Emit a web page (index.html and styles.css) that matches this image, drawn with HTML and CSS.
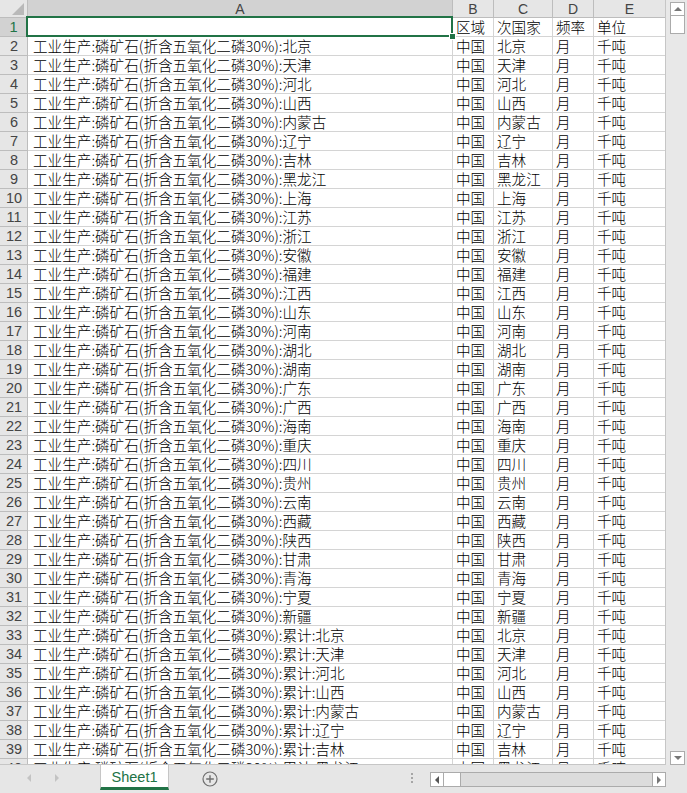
FILE: index.html
```html
<!DOCTYPE html>
<html lang="zh-CN">
<head>
<meta charset="utf-8">
<title>Sheet1</title>
<link rel="stylesheet" href="styles.css">
</head>
<body>
<div class="app">
  <div class="top">
    <div class="sheet">
      <div class="hd corner"><span class="tri"></span></div>
      <div class="hd col sel">A</div>
      <div class="hd col">B</div>
      <div class="hd col">C</div>
      <div class="hd col">D</div>
      <div class="hd col">E</div>

      <div class="hd row sel">1</div><div class="c a active"><span class="selbox"></span><span class="handle"></span></div><div class="c">区域</div><div class="c">次国家</div><div class="c">频率</div><div class="c">单位</div>
      <div class="hd row">2</div><div class="c a">工业生产:磷矿石(折含五氧化二磷30%):北京</div><div class="c">中国</div><div class="c">北京</div><div class="c">月</div><div class="c">千吨</div>
      <div class="hd row">3</div><div class="c a">工业生产:磷矿石(折含五氧化二磷30%):天津</div><div class="c">中国</div><div class="c">天津</div><div class="c">月</div><div class="c">千吨</div>
      <div class="hd row">4</div><div class="c a">工业生产:磷矿石(折含五氧化二磷30%):河北</div><div class="c">中国</div><div class="c">河北</div><div class="c">月</div><div class="c">千吨</div>
      <div class="hd row">5</div><div class="c a">工业生产:磷矿石(折含五氧化二磷30%):山西</div><div class="c">中国</div><div class="c">山西</div><div class="c">月</div><div class="c">千吨</div>
      <div class="hd row">6</div><div class="c a">工业生产:磷矿石(折含五氧化二磷30%):内蒙古</div><div class="c">中国</div><div class="c">内蒙古</div><div class="c">月</div><div class="c">千吨</div>
      <div class="hd row">7</div><div class="c a">工业生产:磷矿石(折含五氧化二磷30%):辽宁</div><div class="c">中国</div><div class="c">辽宁</div><div class="c">月</div><div class="c">千吨</div>
      <div class="hd row">8</div><div class="c a">工业生产:磷矿石(折含五氧化二磷30%):吉林</div><div class="c">中国</div><div class="c">吉林</div><div class="c">月</div><div class="c">千吨</div>
      <div class="hd row">9</div><div class="c a">工业生产:磷矿石(折含五氧化二磷30%):黑龙江</div><div class="c">中国</div><div class="c">黑龙江</div><div class="c">月</div><div class="c">千吨</div>
      <div class="hd row">10</div><div class="c a">工业生产:磷矿石(折含五氧化二磷30%):上海</div><div class="c">中国</div><div class="c">上海</div><div class="c">月</div><div class="c">千吨</div>
      <div class="hd row">11</div><div class="c a">工业生产:磷矿石(折含五氧化二磷30%):江苏</div><div class="c">中国</div><div class="c">江苏</div><div class="c">月</div><div class="c">千吨</div>
      <div class="hd row">12</div><div class="c a">工业生产:磷矿石(折含五氧化二磷30%):浙江</div><div class="c">中国</div><div class="c">浙江</div><div class="c">月</div><div class="c">千吨</div>
      <div class="hd row">13</div><div class="c a">工业生产:磷矿石(折含五氧化二磷30%):安徽</div><div class="c">中国</div><div class="c">安徽</div><div class="c">月</div><div class="c">千吨</div>
      <div class="hd row">14</div><div class="c a">工业生产:磷矿石(折含五氧化二磷30%):福建</div><div class="c">中国</div><div class="c">福建</div><div class="c">月</div><div class="c">千吨</div>
      <div class="hd row">15</div><div class="c a">工业生产:磷矿石(折含五氧化二磷30%):江西</div><div class="c">中国</div><div class="c">江西</div><div class="c">月</div><div class="c">千吨</div>
      <div class="hd row">16</div><div class="c a">工业生产:磷矿石(折含五氧化二磷30%):山东</div><div class="c">中国</div><div class="c">山东</div><div class="c">月</div><div class="c">千吨</div>
      <div class="hd row">17</div><div class="c a">工业生产:磷矿石(折含五氧化二磷30%):河南</div><div class="c">中国</div><div class="c">河南</div><div class="c">月</div><div class="c">千吨</div>
      <div class="hd row">18</div><div class="c a">工业生产:磷矿石(折含五氧化二磷30%):湖北</div><div class="c">中国</div><div class="c">湖北</div><div class="c">月</div><div class="c">千吨</div>
      <div class="hd row">19</div><div class="c a">工业生产:磷矿石(折含五氧化二磷30%):湖南</div><div class="c">中国</div><div class="c">湖南</div><div class="c">月</div><div class="c">千吨</div>
      <div class="hd row">20</div><div class="c a">工业生产:磷矿石(折含五氧化二磷30%):广东</div><div class="c">中国</div><div class="c">广东</div><div class="c">月</div><div class="c">千吨</div>
      <div class="hd row">21</div><div class="c a">工业生产:磷矿石(折含五氧化二磷30%):广西</div><div class="c">中国</div><div class="c">广西</div><div class="c">月</div><div class="c">千吨</div>
      <div class="hd row">22</div><div class="c a">工业生产:磷矿石(折含五氧化二磷30%):海南</div><div class="c">中国</div><div class="c">海南</div><div class="c">月</div><div class="c">千吨</div>
      <div class="hd row">23</div><div class="c a">工业生产:磷矿石(折含五氧化二磷30%):重庆</div><div class="c">中国</div><div class="c">重庆</div><div class="c">月</div><div class="c">千吨</div>
      <div class="hd row">24</div><div class="c a">工业生产:磷矿石(折含五氧化二磷30%):四川</div><div class="c">中国</div><div class="c">四川</div><div class="c">月</div><div class="c">千吨</div>
      <div class="hd row">25</div><div class="c a">工业生产:磷矿石(折含五氧化二磷30%):贵州</div><div class="c">中国</div><div class="c">贵州</div><div class="c">月</div><div class="c">千吨</div>
      <div class="hd row">26</div><div class="c a">工业生产:磷矿石(折含五氧化二磷30%):云南</div><div class="c">中国</div><div class="c">云南</div><div class="c">月</div><div class="c">千吨</div>
      <div class="hd row">27</div><div class="c a">工业生产:磷矿石(折含五氧化二磷30%):西藏</div><div class="c">中国</div><div class="c">西藏</div><div class="c">月</div><div class="c">千吨</div>
      <div class="hd row">28</div><div class="c a">工业生产:磷矿石(折含五氧化二磷30%):陕西</div><div class="c">中国</div><div class="c">陕西</div><div class="c">月</div><div class="c">千吨</div>
      <div class="hd row">29</div><div class="c a">工业生产:磷矿石(折含五氧化二磷30%):甘肃</div><div class="c">中国</div><div class="c">甘肃</div><div class="c">月</div><div class="c">千吨</div>
      <div class="hd row">30</div><div class="c a">工业生产:磷矿石(折含五氧化二磷30%):青海</div><div class="c">中国</div><div class="c">青海</div><div class="c">月</div><div class="c">千吨</div>
      <div class="hd row">31</div><div class="c a">工业生产:磷矿石(折含五氧化二磷30%):宁夏</div><div class="c">中国</div><div class="c">宁夏</div><div class="c">月</div><div class="c">千吨</div>
      <div class="hd row">32</div><div class="c a">工业生产:磷矿石(折含五氧化二磷30%):新疆</div><div class="c">中国</div><div class="c">新疆</div><div class="c">月</div><div class="c">千吨</div>
      <div class="hd row">33</div><div class="c a">工业生产:磷矿石(折含五氧化二磷30%):累计:北京</div><div class="c">中国</div><div class="c">北京</div><div class="c">月</div><div class="c">千吨</div>
      <div class="hd row">34</div><div class="c a">工业生产:磷矿石(折含五氧化二磷30%):累计:天津</div><div class="c">中国</div><div class="c">天津</div><div class="c">月</div><div class="c">千吨</div>
      <div class="hd row">35</div><div class="c a">工业生产:磷矿石(折含五氧化二磷30%):累计:河北</div><div class="c">中国</div><div class="c">河北</div><div class="c">月</div><div class="c">千吨</div>
      <div class="hd row">36</div><div class="c a">工业生产:磷矿石(折含五氧化二磷30%):累计:山西</div><div class="c">中国</div><div class="c">山西</div><div class="c">月</div><div class="c">千吨</div>
      <div class="hd row">37</div><div class="c a">工业生产:磷矿石(折含五氧化二磷30%):累计:内蒙古</div><div class="c">中国</div><div class="c">内蒙古</div><div class="c">月</div><div class="c">千吨</div>
      <div class="hd row">38</div><div class="c a">工业生产:磷矿石(折含五氧化二磷30%):累计:辽宁</div><div class="c">中国</div><div class="c">辽宁</div><div class="c">月</div><div class="c">千吨</div>
      <div class="hd row">39</div><div class="c a">工业生产:磷矿石(折含五氧化二磷30%):累计:吉林</div><div class="c">中国</div><div class="c">吉林</div><div class="c">月</div><div class="c">千吨</div>
      <div class="hd row">40</div><div class="c a">工业生产:磷矿石(折含五氧化二磷30%):累计:黑龙江</div><div class="c">中国</div><div class="c">黑龙江</div><div class="c">月</div><div class="c">千吨</div>
    </div>
    <div class="vscroll">
      <div class="sbtn up"><span class="arr-up"></span></div>
      <div class="vthumb"></div>
      <div class="vtrack"></div>
      <div class="sbtn down"><span class="arr-down"></span></div>
    </div>
  </div>
  <div class="bottom">
    <div class="nav">
      <span class="arr-l"></span>
      <span class="arr-r"></span>
    </div>
    <div class="tab">Sheet1</div>
    <div class="addsheet">
      <svg width="16" height="16" viewBox="0 0 16 16"><circle cx="8" cy="8" r="7" fill="none" stroke="#6f6f6f" stroke-width="1.2"/><path d="M8 4.2v7.6M4.2 8h7.6" stroke="#6f6f6f" stroke-width="1.4"/></svg>
    </div>
    <div class="spacer"></div>
    <div class="dots"><i></i><i></i><i></i></div>
    <div class="hscroll">
      <div class="hbtn"><span class="arr-hl"></span></div>
      <div class="hthumb"></div>
      <div class="htrack"></div>
      <div class="hbtn"><span class="arr-hr"></span></div>
    </div>
    <div class="corner-fill"></div>
  </div>
</div>
</body>
</html>
```
FILE: styles.css
```css
* { box-sizing: border-box; }
html, body { margin: 0; padding: 0; background: #fff; }
body { width: 687px; height: 793px; overflow: hidden; }

.app { width: 687px; height: 793px; display: flex; flex-direction: column; }
.top { display: flex; height: 765px; }

.sheet {
  width: 666px;
  height: 765px;
  overflow: hidden;
  display: grid;
  grid-template-columns: 28px 425px 41px 59px 41px 72px;
  grid-auto-rows: 19px;
  grid-template-rows: 18px;
  border-right: 1px solid #c6c6c6;
  border-bottom: 1px solid #c6c6c6;
}

.hd {
  background: #e6e6e6;
  color: #444;
  font-family: "Liberation Sans", Arial, sans-serif;
  font-size: 14px;
  border-right: 1px solid #bdbdbd;
  border-bottom: 1px solid #bdbdbd;
  display: flex;
  align-items: center;
  justify-content: center;
  line-height: 1;
}
.hd.col { padding-top: 1px; }
.hd.sel { background: #d2d2d2; color: #217346; }
.hd.col.sel { color: #444; }
.hd.row.sel { border-right: 2px solid #217346; }
.hd.row { font-size: 14.5px; padding-left: 1px; }

.corner { position: relative; }
.tri {
  position: absolute;
  right: 3px;
  bottom: 2px;
  width: 0; height: 0;
  border-left: 12px solid transparent;
  border-bottom: 12px solid #b9b9b9;
}

.c {
  font-family: "Noto Sans CJK SC", "Noto Sans", sans-serif;
  font-weight: 300;
  font-size: 14.6px;
  line-height: 18px;
  color: #000;
  padding-left: 3px;
  white-space: nowrap;
  border-right: 1px solid #d4d4d4;
  border-bottom: 1px solid #d4d4d4;
}
.c.a { padding-left: 5px; }
.c.active { position: relative; z-index: 2; }
.selbox {
  position: absolute;
  left: -2px; top: -2px; right: -1px; bottom: -1px;
  border: 2px solid #217346;
}
.handle {
  position: absolute;
  right: -4px; bottom: -4px;
  width: 7px; height: 7px;
  background: #217346;
  border: 1px solid #fff;
}

.vscroll {
  width: 21px;
  height: 765px;
  background: #e8e8e8;
  display: flex;
  flex-direction: column;
  align-items: center;
  padding: 2px 0 0 2px;
}
.sbtn {
  width: 15px;
  height: 14px;
  background: #fff;
  border: 1px solid #ababab;
  display: flex;
  align-items: center;
  justify-content: center;
}
.vthumb {
  width: 15px;
  height: 18px;
  background: #fff;
  border: 1px solid #ababab;
  border-top: none;
}
.vtrack { flex: 1; }
.arr-up { width: 0; height: 0; border-left: 4px solid transparent; border-right: 4px solid transparent; border-bottom: 4px solid #777; }
.arr-down { width: 0; height: 0; border-left: 4px solid transparent; border-right: 4px solid transparent; border-top: 4px solid #777; }

.bottom {
  height: 28px;
  background: #e6e6e6;
  display: flex;
  align-items: flex-start;
}
.nav {
  width: 100px;
  height: 26px;
  display: flex;
  align-items: center;
  padding-left: 27px;
  gap: 24px;
}
.arr-l { width: 0; height: 0; border-top: 4px solid transparent; border-bottom: 4px solid transparent; border-right: 4px solid #c3c3c3; }
.arr-r { width: 0; height: 0; border-top: 4px solid transparent; border-bottom: 4px solid transparent; border-left: 4px solid #c3c3c3; }

.tab {
  width: 69px;
  height: 25px;
  background: #fff;
  border-left: 1px solid #c6c6c6;
  border-right: 1px solid #c6c6c6;
  border-bottom: 3px solid #217346;
  color: #217346;
  font-family: "Liberation Sans", Arial, sans-serif;
  font-size: 14.5px;
  display: flex;
  align-items: center;
  justify-content: center;
  padding-top: 1px;
}
.addsheet {
  width: 16px; height: 16px;
  margin: 6px 0 0 33px;
  display: flex;
}
.spacer { flex: 1; }
.dots {
  width: 4px;
  margin: 8px 15px 0 0;
  display: flex;
  flex-direction: column;
  gap: 2px;
}
.dots i { display: block; width: 2px; height: 2px; background: #a6a6a6; }
.hscroll {
  margin-top: 7px;
  width: 236px;
  height: 15px;
  display: flex;
  background: #dcdcdc;
  border: 1px solid #ababab;
}
.hbtn {
  width: 13px;
  height: 13px;
  background: #fff;
  display: flex;
  align-items: center;
  justify-content: center;
}
.hbtn:first-child { border-right: 1px solid #ababab; }
.hbtn:last-child { border-left: 1px solid #ababab; }
.hthumb { width: 17px; height: 13px; background: #fff; border-right: 1px solid #ababab; }
.htrack { flex: 1; }
.arr-hl { width: 0; height: 0; border-top: 4px solid transparent; border-bottom: 4px solid transparent; border-right: 4px solid #555; }
.arr-hr { width: 0; height: 0; border-top: 4px solid transparent; border-bottom: 4px solid transparent; border-left: 4px solid #777; }
.corner-fill { width: 21px; }
```
